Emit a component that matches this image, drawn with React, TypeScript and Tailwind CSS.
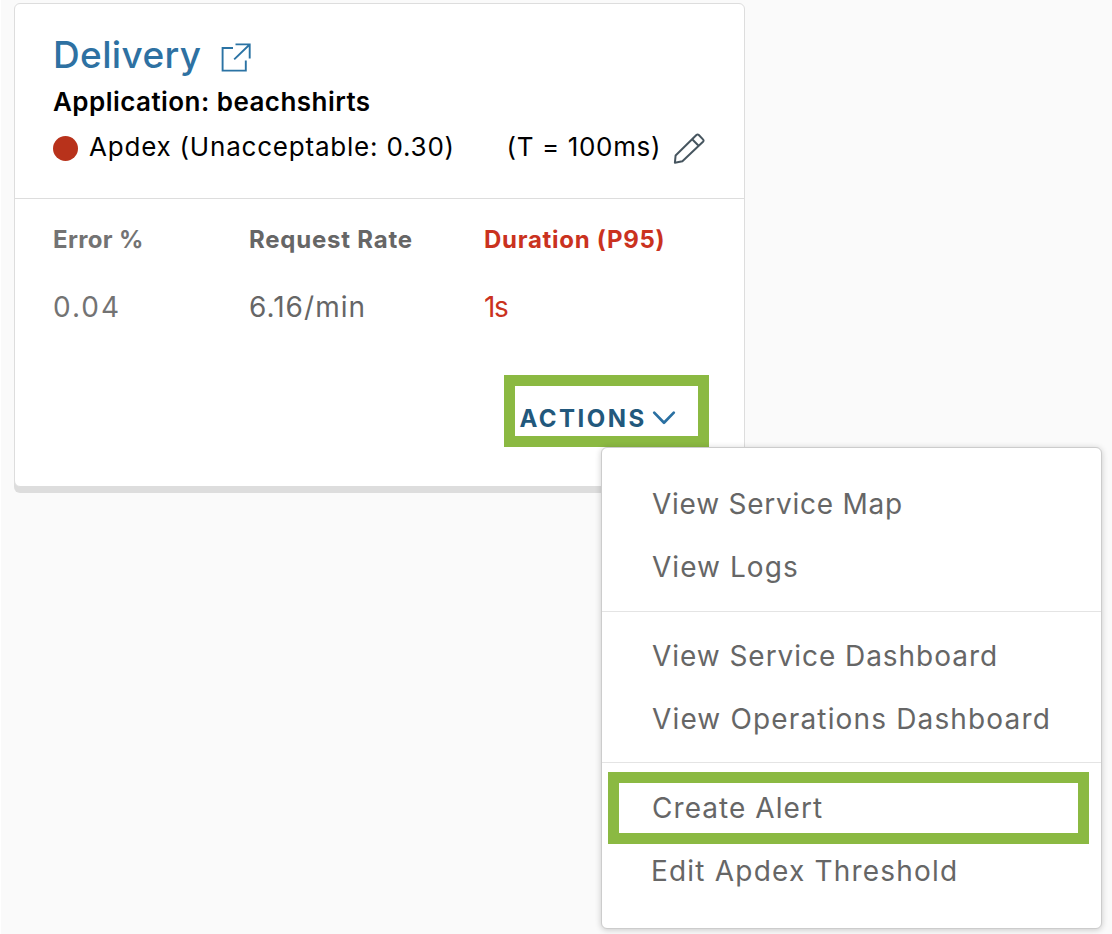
import React from "react";

const ITEM = "flex h-[63px] items-center whitespace-nowrap pl-[50px] text-[28px] text-[#666]";

function ExternalLinkIcon() {
  return (
    <svg className="h-[30px] w-[30px]" viewBox="0 0 30 30" fill="none" stroke="#2b73a4" strokeWidth="1.9">
      <path d="M12 5H1.6v22.6h23.2V17.5M14.5 1.4h14.2v14M28.4 1.7 13.2 16.4" />
    </svg>
  );
}

function PencilIcon() {
  return (
    <svg className="h-8 w-8" viewBox="0 0 32 32" fill="none" stroke="#46555f" strokeWidth="2" strokeLinejoin="round">
      <path d="M1.9 29.7 2.6 22.5 23.4 2Q24.6 .9 25.8 2L30 6.4Q31.2 7.6 30 8.8L9.4 28.3ZM19.2 6.3l6.9 7" />
    </svg>
  );
}

function Chevron() {
  return (
    <svg className="h-4 w-6" viewBox="0 0 24 16" fill="none" stroke="#2a70a2" strokeWidth="2.7" strokeLinecap="round" strokeLinejoin="round">
      <path d="M2.2 2.6 12 12.8 21.8 2.6" />
    </svg>
  );
}

export default function App() {
  return (
    <div className="relative h-[934px] w-[1112px] overflow-hidden border-l border-white bg-[#fafafa] pl-[13px] pt-[3px] font-['Inter',sans-serif]">
      <section className="flex h-[484px] w-[731px] flex-col rounded-md border border-[#ddd] bg-white shadow-[0_6px_0_0_#ddd]">
        <header className="h-[195px] border-b border-[#ddd] pl-[37px] pt-[27px] whitespace-nowrap">
          <div className="flex h-12 items-center">
            <h1 className="w-[168.5px] pl-px text-[37px] font-[520] leading-[48px] tracking-[0.35px] text-[#2e71a2]">Delivery</h1>
            <span className="pt-[6px]"><ExternalLinkIcon /></span>
          </div>
          <p className="h-[45px] pl-px text-[26px] font-semibold leading-[45px] tracking-[0.45px] text-black">Application: beachshirts</p>
          <div className="flex h-[46px] items-center pl-[0.5px] text-[26px] leading-[46px] text-black">
            <span className="mr-[11.5px] mt-[3px] h-[25px] w-[25px] rounded-full bg-[#b8321b]" />
            <span className="w-[417.5px] tracking-[0.79px]">Apdex (Unacceptable: 0.30)</span>
            <span className="w-[166.5px] tracking-[0.65px]">(T = 100ms)</span>
            <span className="pt-[3px]"><PencilIcon /></span>
          </div>
        </header>
        <div className="flex whitespace-nowrap pl-[37px] pt-[25px] text-[#666]">
          <div className="w-[196px] text-[#737373]">
            <div className="h-[32px] pl-px text-[24px] font-[650] leading-[32px] tracking-[0.35px]">Error %</div>
            <div className="mt-[34px] h-[34px] pl-px text-[28px] leading-[34px] tracking-[2px]">0.04</div>
          </div>
          <div className="w-[235px]">
            <div className="h-[32px] pl-px text-[24px] font-[650] leading-[32px] tracking-[0.79px]">Request Rate</div>
            <div className="mt-[34px] h-[34px] pl-px text-[28px] leading-[34px] tracking-[1.05px]">6.16/min</div>
          </div>
          <div className="text-[#ca321e]">
            <div className="h-[32px] pl-px text-[24px] font-[650] leading-[32px] tracking-[0.72px]">Duration (P95)</div>
            <div className="mt-[34px] h-[34px] pl-px text-[28px] leading-[34px] tracking-[-1.39px]">1s</div>
          </div>
        </div>
        <button className="ml-[489px] mt-[51px] flex h-[72px] w-[205px] shrink-0 items-center border-[11px] border-[#8bb942] bg-white pl-[4.5px] pt-[14px]">
          <span className="w-[132.5px] whitespace-nowrap pt-px text-left text-[24px] font-[650] tracking-[2.45px] text-[#22587c]">ACTIONS</span>
          <Chevron />
        </button>
      </section>

      <nav className="absolute left-[600px] top-[447px] h-[482px] w-[501px] rounded-md border border-[#ccc] bg-white pt-[24.5px] shadow-[0_1px_6px_rgba(0,0,0,0.2)]">
        <div className="border-b border-[#e4e4e4] pb-[12.5px]">
          <div className={`${ITEM} tracking-[0.75px]`}>View Service Map</div>
          <div className={`${ITEM} tracking-[1.05px]`}>View Logs</div>
        </div>
        <div className="border-b border-[#e4e4e4] pb-[12px] pt-[12px]">
          <div className={`${ITEM} tracking-[0.95px]`}>View Service Dashboard</div>
          <div className={`${ITEM} tracking-[1.15px]`}>View Operations Dashboard</div>
        </div>
        <div className="pt-[13px]">
          <div className={`${ITEM} relative tracking-[1.06px]`}>
            <span>Create Alert</span>
            <span className="absolute -top-[4px] left-[6px] h-[72px] w-[481px] border-[11px] border-[#8bb942]" />
          </div>
          <div className={`${ITEM} tracking-[1.2px]`}><span className="-ml-px">Edit Apdex Threshold</span></div>
        </div>
      </nav>
    </div>
  );
}
